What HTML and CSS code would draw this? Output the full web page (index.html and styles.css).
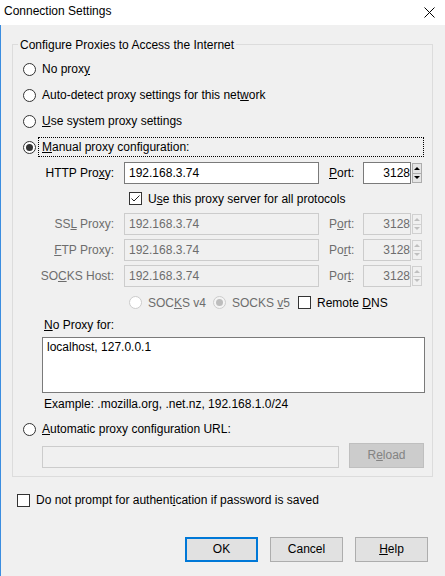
FILE: index.html
```html
<!DOCTYPE html>
<html lang="en">
<head>
<meta charset="utf-8">
<title>Connection Settings</title>
<link rel="stylesheet" href="styles.css">
</head>
<body>
<div class="window">
  <div class="titlebar">
    <span class="title">Connection Settings</span>
    <svg class="close" width="11" height="11" viewBox="0 0 11 11"><path d="M0.5 0.5 L10.5 10.5 M10.5 0.5 L0.5 10.5" stroke="#000" stroke-width="1" fill="none"/></svg>
  </div>
  <div class="client">
    <div class="group">
      <span class="legend">Configure Proxies to Access the Internet</span>
      <div class="opt-row"><span class="radio"></span><label class="lbl">No prox<u>y</u></label></div>
      <div class="opt-row"><span class="radio"></span><label class="lbl">Auto-detect proxy settings for this net<u>w</u>ork</label></div>
      <div class="opt-row"><span class="radio"></span><label class="lbl"><u>U</u>se system proxy settings</label></div>
      <div class="opt-row"><span class="radio checked"></span><label class="lbl focus"><u>M</u>anual proxy configuration:</label></div>

      <div class="proxy-row http">
        <label class="plabel">HTTP Pro<u>x</u>y:</label>
        <input class="field host" type="text" value="192.168.3.74">
        <label class="port-label"><u>P</u>ort:</label>
        <input class="field port" type="text" value="3128">
        <span class="spin"><span class="spin-btn"><span class="arrow-up"></span></span><span class="spin-btn"><span class="arrow-down"></span></span></span>
      </div>
      <div class="share-row">
        <span class="check"><svg width="11" height="11" viewBox="0 0 11 11"><path d="M1.5 5.5 L4 8 L9.5 2.5" stroke="#222" stroke-width="1" fill="none"/></svg></span>
        <label class="lbl">U<u>s</u>e this proxy server for all protocols</label>
      </div>
      <div class="proxy-row disabled">
        <label class="plabel">SS<u>L</u> Proxy:</label>
        <input class="field host" type="text" value="192.168.3.74" disabled>
        <label class="port-label">P<u>o</u>rt:</label>
        <input class="field port" type="text" value="3128" disabled>
        <span class="spin"><span class="spin-btn"><span class="arrow-up"></span></span><span class="spin-btn"><span class="arrow-down"></span></span></span>
      </div>
      <div class="proxy-row disabled gap">
        <label class="plabel"><u>F</u>TP Proxy:</label>
        <input class="field host" type="text" value="192.168.3.74" disabled>
        <label class="port-label">Po<u>r</u>t:</label>
        <input class="field port" type="text" value="3128" disabled>
        <span class="spin"><span class="spin-btn"><span class="arrow-up"></span></span><span class="spin-btn"><span class="arrow-down"></span></span></span>
      </div>
      <div class="proxy-row disabled gap">
        <label class="plabel">SO<u>C</u>KS Host:</label>
        <input class="field host" type="text" value="192.168.3.74" disabled>
        <label class="port-label">Por<u>t</u>:</label>
        <input class="field port" type="text" value="3128" disabled>
        <span class="spin"><span class="spin-btn"><span class="arrow-up"></span></span><span class="spin-btn"><span class="arrow-down"></span></span></span>
      </div>
      <div class="version-row">
        <div class="opt v4"><span class="radio disabled"></span><label class="lbl muted">SOC<u>K</u>S v4</label></div>
        <div class="opt v5"><span class="radio disabled checked"></span><label class="lbl muted">SOCKS <u>v</u>5</label></div>
        <div class="opt"><span class="check"></span><label class="lbl">Remote <u>D</u>NS</label></div>
      </div>
      <div class="noproxy-label"><u>N</u>o Proxy for:</div>
      <textarea class="noproxy">localhost, 127.0.0.1</textarea>
      <div class="example">Example: .mozilla.org, .net.nz, 192.168.1.0/24</div>
      <div class="opt-row auto"><span class="radio"></span><label class="lbl"><u>A</u>utomatic proxy configuration URL:</label></div>
      <div class="url-row">
        <input class="field url" type="text" value="" disabled>
        <button class="btn reload" disabled>R<u>e</u>load</button>
      </div>
    </div>

    <div class="auth-row"><span class="check"></span><label class="lbl">Do not prompt for authent<u>i</u>cation if password is saved</label></div>

    <div class="buttons">
      <button class="btn default">OK</button>
      <button class="btn">Cancel</button>
      <button class="btn"><u>H</u>elp</button>
    </div>
  </div>
</div>
</body>
</html>
```
FILE: styles.css
```css
* { box-sizing: border-box; }

html, body {
  margin: 0;
  padding: 0;
}

body {
  font-family: "Liberation Sans", Arial, sans-serif;
  font-size: 12px;
  line-height: 15px;
  color: #000;
  background: #f0f0f0;
}

.window {
  width: 445px;
  height: 576px;
  display: flex;
  flex-direction: column;
  background: #f0f0f0;
  overflow: hidden;
}

.titlebar {
  height: 25px;
  flex: none;
  background: #fff;
  display: flex;
  justify-content: space-between;
  align-items: flex-start;
  padding: 4px 0 0 4px;
}

.title { line-height: 15px; }

.close {
  margin: 3px 10px 0 0;
  display: block;
}

.client {
  flex: 1;
  border-left: 1px solid #3b8de0;
}

.group {
  position: relative;
  margin: 19px 0 0 11px;
  width: 421px;
  height: 433px;
  border: 1px solid #dcdcdc;
  padding: 11px 0 8px 0;
}

.legend {
  position: absolute;
  top: -7px;
  left: 5px;
  padding: 0 2px;
  background: #f0f0f0;
  line-height: 15px;
}

.opt-row {
  height: 26px;
  display: flex;
  align-items: center;
  padding-left: 10px;
}

.lbl {
  display: block;
  margin-left: 2px;
  border: 1px solid transparent;
  padding: 1px 3px;
  line-height: 16px;
  white-space: nowrap;
}

.lbl.focus {
  width: 386px;
  border: 1px dotted #000;
}

.lbl.muted { color: #6d6d6d; }

.radio {
  width: 13px;
  height: 13px;
  flex: none;
  border: 1px solid #333;
  border-radius: 50%;
  background: #fff;
  display: flex;
  align-items: center;
  justify-content: center;
}

.radio.checked::after {
  content: "";
  width: 7px;
  height: 7px;
  border-radius: 50%;
  background: #333;
}

.radio.disabled {
  border-color: #cccccc;
  background: #fff;
}

.radio.disabled.checked {
  background: #f4f4f4;
}

.radio.disabled.checked::after { background: #bdbdbd; }

.check {
  width: 13px;
  height: 13px;
  flex: none;
  border: 1px solid #333;
  background: #fff;
  display: flex;
  align-items: center;
  justify-content: center;
}

.check svg { display: block; }

.proxy-row {
  height: 22px;
  display: flex;
  align-items: center;
}

.proxy-row.http { margin-top: 2px; }
.proxy-row.gap { margin-top: 4px; }

.plabel {
  width: 101px;
  text-align: right;
  margin-right: 10px;
  white-space: nowrap;
}

.port-label {
  width: 34px;
  margin-left: 10px;
}

.proxy-row.disabled .plabel,
.proxy-row.disabled .port-label { color: #6d6d6d; }

.field {
  font: inherit;
  line-height: 15px;
  height: 22px;
  margin: 0;
  border: 1px solid #7a7a7a;
  border-radius: 0;
  background: #fff;
  color: #000;
  padding: 0 4px;
  outline: none;
}

.field:disabled {
  background: #f0f0f0;
  border-color: #cccccc;
  color: #6d6d6d;
}

.host { width: 195px; }

.port {
  width: 48px;
  text-align: right;
  padding: 0 0 0 2px;
}

.spin {
  width: 10px;
  height: 20px;
  margin-left: 1px;
  display: flex;
  flex-direction: column;
}

.spin-btn {
  flex: 1;
  border: 1px solid #adadad;
  background: #e5e5e5;
  display: flex;
  align-items: center;
  justify-content: center;
}

.spin-btn + .spin-btn { border-top: 0; }

.arrow-up,
.arrow-down {
  width: 0;
  height: 0;
  border-left: 3px solid transparent;
  border-right: 3px solid transparent;
}

.arrow-up { border-bottom: 3px solid #000; }
.arrow-down { border-top: 3px solid #000; }

.proxy-row.disabled .spin-btn {
  border-color: #d0d0d0;
  background: #f0f0f0;
}

.proxy-row.disabled .arrow-up { border-bottom-color: #bfbfbf; }
.proxy-row.disabled .arrow-down { border-top-color: #bfbfbf; }

.share-row {
  height: 29px;
  display: flex;
  align-items: center;
  padding-left: 116px;
}

.version-row {
  height: 31px;
  display: flex;
  align-items: center;
  padding-left: 116px;
}

.opt {
  display: flex;
  align-items: center;
}

.opt.v4 { width: 84px; }
.opt.v5 { width: 85px; }

.noproxy-label {
  padding-left: 31px;
  line-height: 15px;
  height: 15px;
}

.noproxy {
  display: block;
  margin: 4px 0 0 29px;
  width: 383px;
  height: 56px;
  border: 1px solid #7a7a7a;
  border-radius: 0;
  padding: 2px 4px;
  font: inherit;
  line-height: 15px;
  color: #000;
  background: #fff;
  resize: none;
  overflow: hidden;
  outline: none;
}

.example {
  margin-top: 4px;
  padding-left: 31px;
  height: 15px;
}

.opt-row.auto { margin-top: 4px; }

.url-row {
  margin-top: 1px;
  height: 25px;
  display: flex;
  align-items: flex-start;
}

.url {
  margin: 3px 0 0 29px;
  width: 297px;
}

.btn {
  font: inherit;
  line-height: 15px;
  width: 73px;
  height: 25px;
  margin: 0;
  padding: 0;
  border: 1px solid #adadad;
  border-radius: 0;
  background: #e1e1e1;
  color: #000;
}

.btn.reload {
  width: 75px;
  margin-left: 10px;
}

.btn:disabled {
  background: #cccccc;
  border-color: #bfbfbf;
  color: #838383;
}

.btn.default { border: 2px solid #0078d7; }

.auth-row {
  margin-top: 10px;
  height: 26px;
  display: flex;
  align-items: center;
  padding-left: 16px;
}

.buttons {
  margin-top: 24px;
  display: flex;
  justify-content: flex-end;
  gap: 12px;
  padding-right: 17px;
}
```
